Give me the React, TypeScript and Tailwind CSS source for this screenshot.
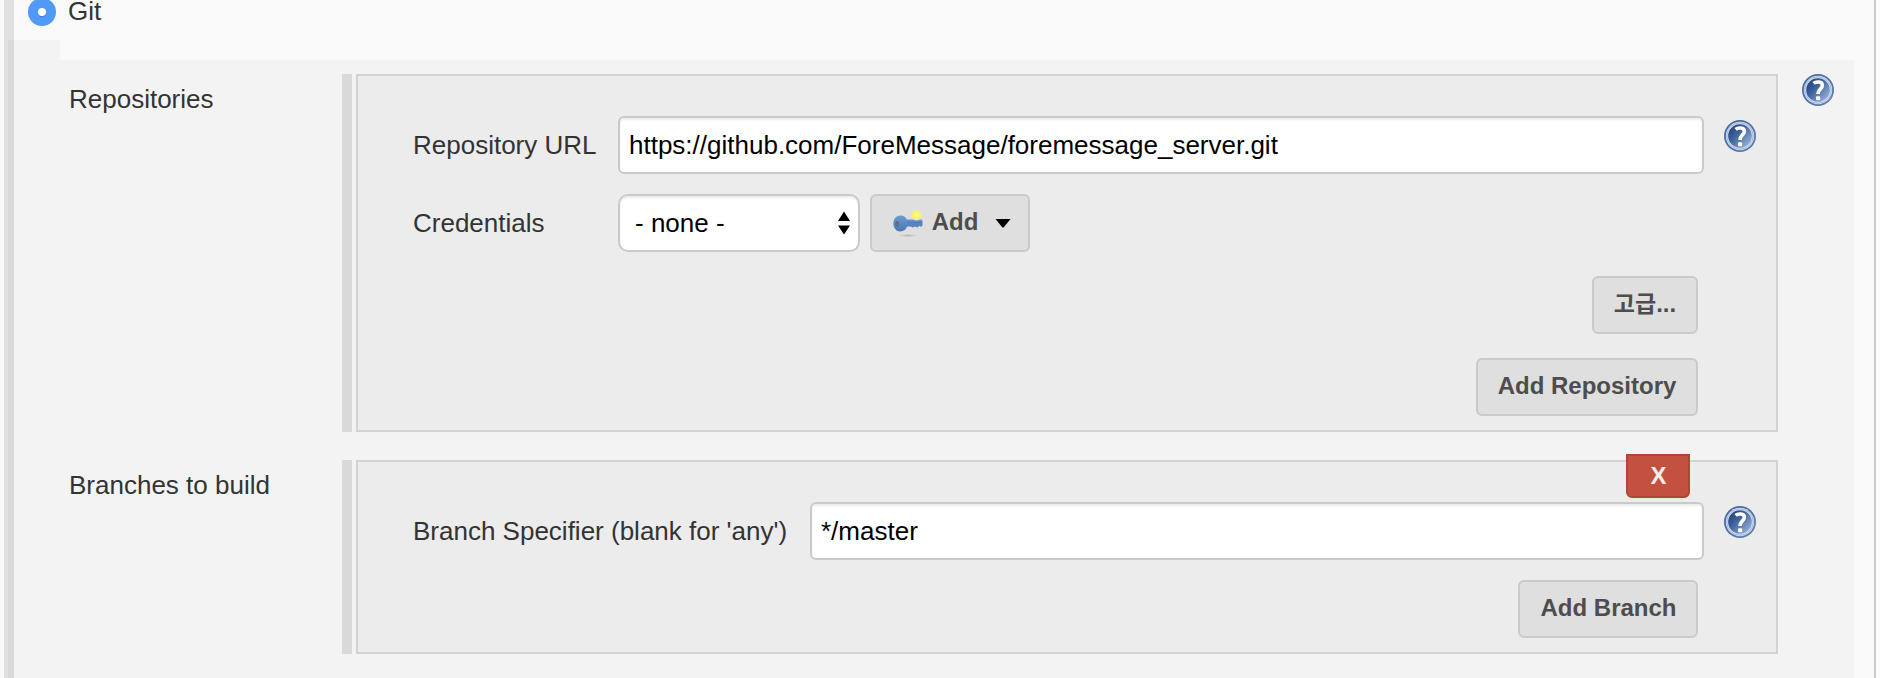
import type { ReactNode } from "react";

function Help({ className = "" }: { className?: string }) {
  return (
    <svg viewBox="0 0 32 32" className={`size-8 shrink-0 ${className}`} aria-label="Help">
      <defs>
        <linearGradient id="help-fill" x1="0.1" y1="0.2" x2="0.85" y2="0.9">
          <stop offset="0" stopColor="#264785" />
          <stop offset="0.4" stopColor="#45689f" />
          <stop offset="1" stopColor="#93aed5" />
        </linearGradient>
        <linearGradient id="help-rim" x1="0" y1="0" x2="1" y2="1">
          <stop offset="0" stopColor="#41629f" />
          <stop offset="1" stopColor="#6583b5" />
        </linearGradient>
      </defs>
      <circle cx="16" cy="16" r="16" fill="url(#help-rim)" />
      <circle cx="16" cy="16" r="14.2" fill="#d3ddec" />
      <circle cx="16" cy="16" r="13.2" fill="none" stroke="#9db2d4" strokeWidth="0.8" />
      <circle cx="16" cy="16" r="11.8" fill="url(#help-fill)" />
      <path
        d="M11.6 9.4C13.8 7.4 20.4 7.2 20.4 11.3C20.4 14.6 16 15.2 16 20"
        fill="none"
        stroke="#fff"
        strokeWidth="3.6"
      />
      <rect x="14" y="22.2" width="4.2" height="4" rx="1" fill="#fff" />
    </svg>
  );
}

function KeyIcon() {
  return (
    <svg viewBox="0 0 32 32" className="size-8 shrink-0" aria-hidden="true">
      <defs>
        <radialGradient id="spark">
          <stop offset="0" stopColor="#fffbb0" />
          <stop offset="0.4" stopColor="#fdf568" />
          <stop offset="0.8" stopColor="#f5ee84" />
          <stop offset="1" stopColor="#f2ee9a" stopOpacity="0" />
        </radialGradient>
        <radialGradient id="key-shadow">
          <stop offset="0" stopColor="#b0b0b0" />
          <stop offset="1" stopColor="#dfdfdf" stopOpacity="0" />
        </radialGradient>
        <linearGradient id="key-body" x1="0" y1="0" x2="0" y2="1">
          <stop offset="0" stopColor="#6f9ad0" />
          <stop offset="1" stopColor="#4a76b6" />
        </linearGradient>
      </defs>
      <ellipse cx="16" cy="29.5" rx="13" ry="2.2" fill="url(#key-shadow)" />
      <path
        d="M8.5 9.6C11.5 9.6 13.9 11.2 14.7 13.6H29.5L30.5 15V19.5L29 20.8L27 20L25.5 21.4L23 20.4L21 21.4L18.5 20.4H15.1C14.1 23.2 11.7 25.4 8.3 25.4C4.4 25.4 1.4 22 1.4 17.4C1.4 12.8 4.4 9.6 8.5 9.6Z"
        fill="url(#key-body)"
      />
      <path d="M15 16.6H30" stroke="#4c79b8" strokeWidth="1.2" />
      <ellipse cx="5.2" cy="17.8" rx="2" ry="2.8" fill="#55708f" />
      <circle cx="24.6" cy="9.2" r="5.8" fill="url(#spark)" />
    </svg>
  );
}

function Button({ children, className = "" }: { children: ReactNode; className?: string }) {
  return (
    <button
      type="button"
      className={`flex h-[58px] items-center justify-center rounded-[6px] border-2 border-[#cacaca] bg-[#dfdfdf] pb-[3px] text-[24px] leading-7 font-bold whitespace-nowrap text-[#4d4d4d] ${className}`}
    >
      {children}
    </button>
  );
}

function Field({ value, className = "" }: { value: string; className?: string }) {
  return (
    <div
      className={`flex h-[58px] items-center rounded-[6px] border-2 border-[#cacaca] bg-white pl-[9px] text-[26px] leading-[30px] text-black shadow-[inset_0_2px_2px_rgba(0,0,0,0.075)] ${className}`}
    >
      {value}
    </div>
  );
}

function Section({ label, children, className = "" }: { label: string; children: ReactNode; className?: string }) {
  return (
    <section className={`flex ${className}`}>
      <div className="w-[274px] shrink-0 pt-[10px] pl-px">{label}</div>
      <div className="mr-1 w-[10px] shrink-0 bg-[#d9d9d9]" />
      <div className="relative w-[1422px] shrink-0 border-2 border-[#d3d3d3] bg-[#ececec] pl-[55px]">{children}</div>
    </section>
  );
}

export default function App() {
  return (
    <main className="flex h-[678px] w-[1880px] overflow-hidden bg-[#f9f9f9] pl-1 font-['Liberation_Sans','Noto_Sans_CJK_KR',sans-serif] text-[26px] leading-[30px] text-[#333]">
      <div className="flex w-[10px] shrink-0 flex-col items-end bg-[#e0e0e0] pt-10">
        <div className="w-[6px] grow bg-[#d9d9d9]" />
      </div>
      <div className="w-[46px] shrink-0 pt-10">
        <div className="h-full bg-[#f3f3f3]" />
      </div>
      <div className="flex w-[1794px] shrink-0 flex-col">
        <header className="-ml-8 flex h-[60px] shrink-0 items-start">
          <svg viewBox="0 0 28 28" className="-mt-[2px] size-7" aria-hidden="true">
            <circle cx="14" cy="14" r="14" fill="#5199f7" />
            <circle cx="14" cy="15" r="4.4" fill="#3378d0" opacity="0.6" />
            <circle cx="14" cy="14" r="4" fill="#fff" />
          </svg>
          <span className="ml-3 leading-[22px]">Git</span>
        </header>
        <div className="grow bg-[#f3f3f3] pt-[14px] pl-2">
          <div className="flex">
            <Section label="Repositories" className="h-[358px]">
              <div className="flex pt-10">
                <div className="w-[205px] shrink-0 pt-[14px]">Repository URL</div>
                <Field value="https://github.com/ForeMessage/foremessage_server.git" className="w-[1086px]" />
                <Help className="mt-1 ml-5" />
              </div>
              <div className="mt-5 flex">
                <div className="w-[205px] shrink-0 pt-[14px]">Credentials</div>
                <div className="flex h-[58px] w-[242px] items-center justify-between rounded-[10px] border-2 border-[#cacaca] bg-white pr-2 pl-[15px] text-black shadow-[inset_0_2px_2px_rgba(0,0,0,0.075)]">
                  <span>- none -</span>
                  <svg viewBox="0 0 12 24" className="h-6 w-3" aria-hidden="true">
                    <path d="M6 0.5L12 10H0ZM6 23.5L12 14.5H0Z" fill="#000" />
                  </svg>
                </div>
                <Button className="ml-[10px] w-[160px] pl-[3px]">
                  <KeyIcon />
                  <span className="ml-2">Add</span>
                  <svg viewBox="0 0 16 10" className="mt-[3px] ml-[17px] h-[10px] w-4" aria-hidden="true">
                    <path d="M0.5 1H15.5L8.6 9.4H7.4Z" fill="#000" />
                  </svg>
                </Button>
              </div>
              <div className="mt-6 flex flex-col items-end gap-6 pr-[78px]">
                <Button className="w-[106px]">
                  <span className="text-[23px]">고급</span>
                  <span>...</span>
                </Button>
                <Button className="w-[222px]">Add Repository</Button>
              </div>
            </Section>
            <Help className="ml-6" />
          </div>
          <Section label="Branches to build" className="mt-7 h-[194px]">
            <button
              type="button"
              className="absolute -top-2 right-[86px] flex h-11 w-16 items-center justify-center rounded-b-[6px] border-2 border-[#b04435] bg-[#c4513f] pl-px text-[24px] leading-7 font-bold text-[#eee]"
            >
              X
            </button>
            <div className="flex pt-10">
              <div className="w-[397px] shrink-0 pt-[14px]">Branch Specifier (blank for 'any')</div>
              <Field value="*/master" className="w-[894px]" />
              <Help className="mt-1 ml-5" />
            </div>
            <div className="mt-5 flex justify-end pr-[78px]">
              <Button className="w-[180px] pl-px">Add Branch</Button>
            </div>
          </Section>
        </div>
      </div>
      <div className="ml-5 w-[2px] shrink-0 bg-[#cacaca]" />
      <div className="grow bg-[#fcfcfc]" />
    </main>
  );
}
